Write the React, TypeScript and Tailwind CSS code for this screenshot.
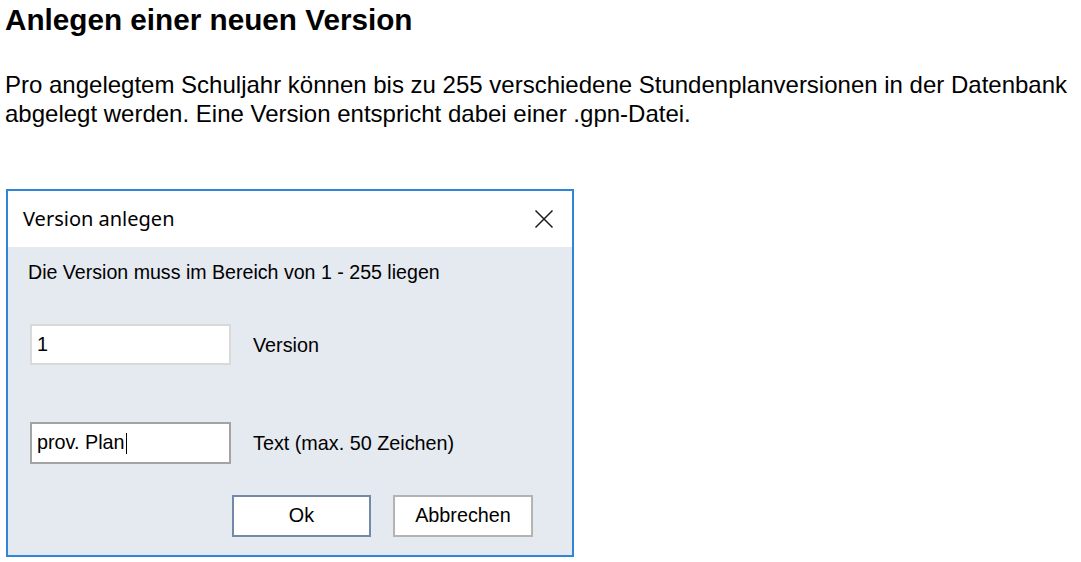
const dlgFont = { fontFamily: '"Liberation Sans", Arial, sans-serif' };

function TextBox({ value, focused }: { value: string; focused?: boolean }) {
  return (
    <div
      className={`flex h-full w-[201px] items-center border-2 bg-white pl-[5px] text-[19.8px] text-black ${
        focused ? 'border-[#a3a3a3]' : 'border-[#d9d9d9]'
      }`}
    >
      <span>{value}</span>
      {focused && <span className="ml-[1px] inline-block h-[21px] w-[1.5px] bg-black" />}
    </div>
  );
}

function DialogButton({ label, primary }: { label: string; primary?: boolean }) {
  return (
    <div
      className={`flex h-[42px] items-center justify-center border-2 bg-white text-[19.8px] text-black ${
        primary ? 'w-[139px] border-[#7389a8]' : 'w-[140px] border-[#b3b3b3]'
      }`}
    >
      {label}
    </div>
  );
}

export default function App() {
  return (
    <div className="h-[562px] w-[1081px] overflow-hidden bg-white font-['Liberation_Sans',Arial,sans-serif] text-black">
      <h1 className="pl-[5px] pt-[3px] text-[29.7px] font-bold leading-[34px]">Anlegen einer neuen Version</h1>

      <p className="mt-[33px] pl-[5px] text-[24px] leading-[29px]">
        Pro angelegtem Schuljahr können bis zu 255 verschiedene Stundenplanversionen in der Datenbank
        <br />
        abgelegt werden. Eine Version entspricht dabei einer .gpn-Datei.
      </p>

      {/* Dialog */}
      <div className="ml-[6px] mt-[61px] flex h-[368px] w-[568px] flex-col border-2 border-[#2f86d9]">
        <div className="flex h-[56px] items-center justify-between bg-white pl-[15px] pr-[18px]">
          <span className="font-['Noto_Sans',sans-serif] text-[20px] text-black">Version anlegen</span>
          <svg width="20" height="20" viewBox="0 0 20 20" className="text-[#1a1a1a]">
            <path d="M1.5 1.5 L18.5 18.5 M18.5 1.5 L1.5 18.5" stroke="currentColor" strokeWidth="1.5" fill="none" />
          </svg>
        </div>

        <div className="flex flex-1 flex-col bg-[#e5e9f0] pl-[22px]" style={dlgFont}>
          <p className="-ml-[2px] mt-[14px] text-[19.6px] leading-[22px]">
            Die Version muss im Bereich von 1 - 255 liegen
          </p>

          <div className="mt-[41px] flex h-[41px] items-center gap-[22px]">
            <TextBox value="1" />
            <span className="mt-[2px] text-[19.8px]">Version</span>
          </div>

          <div className="mt-[57px] flex h-[42px] items-center gap-[22px]">
            <TextBox value="prov. Plan" focused />
            <span className="mt-[2px] text-[19.8px]">Text (max. 50 Zeichen)</span>
          </div>

          <div className="ml-[202px] mt-[31px] flex gap-[22px]">
            <DialogButton label="Ok" primary />
            <DialogButton label="Abbrechen" />
          </div>
        </div>
      </div>
    </div>
  );
}
